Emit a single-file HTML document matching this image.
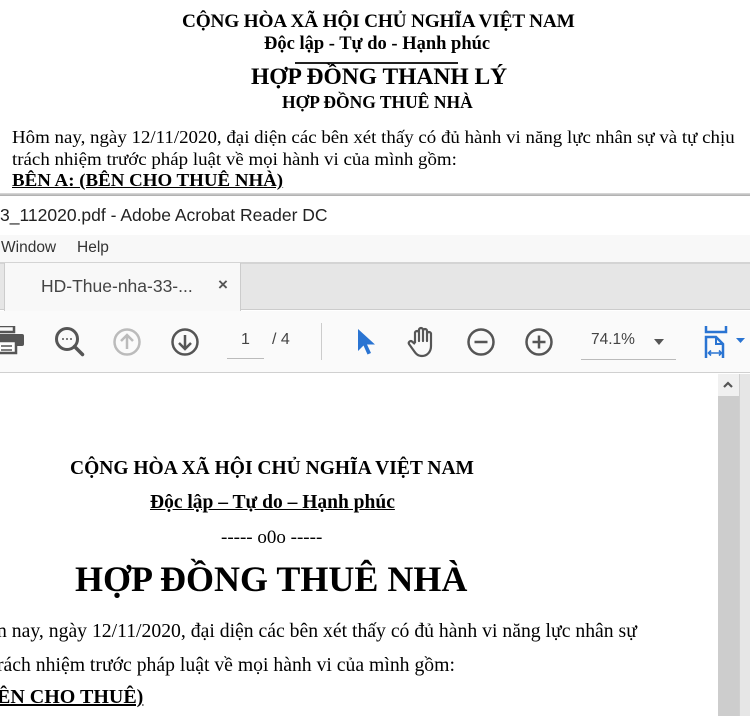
<!DOCTYPE html>
<html><head><meta charset="utf-8"><style>
*{margin:0;padding:0;box-sizing:border-box}
body{width:750px;height:716px;overflow:hidden;background:#fff;position:relative;font-family:"Liberation Serif",serif;color:#000}
.a{position:absolute;white-space:nowrap}
.ui{font-family:"Liberation Sans","DejaVu Sans",sans-serif}
svg{position:absolute}
.sx{transform-origin:0 0}
</style></head><body>
<!-- top doc -->
<div class="a" style="left:182px;top:11px;font-size:19.3px;font-weight:bold;letter-spacing:-0.2px">CỘNG HÒA XÃ HỘI CHỦ NGHĨA VIỆT NAM</div>
<div class="a" style="left:264px;top:34px;font-size:18.5px;font-weight:bold">Độc lập - Tự do - Hạnh phúc</div>
<div class="a" style="left:295px;top:62px;width:163px;height:2px;background:#222"></div>
<div class="a" style="left:251px;top:64px;font-size:23.5px;font-weight:bold">HỢP ĐỒNG THANH LÝ</div>
<div class="a" style="left:282px;top:92px;font-size:17.5px;font-weight:bold">HỢP ĐỒNG THUÊ NHÀ</div>
<div class="a sx" style="left:12px;top:127px;font-size:18px;transform:scaleX(1.05)">Hôm nay, ngày 12/11/2020, đại diện các bên xét thấy có đủ hành vi năng lực nhân sự và tự chịu</div>
<div class="a sx" style="left:12px;top:149px;font-size:18px;transform:scaleX(1.05)">trách nhiệm trước pháp luật về mọi hành vi của mình gồm:</div>
<div class="a sx" style="left:12px;top:170px;font-size:18px;font-weight:bold;text-decoration:underline;transform:scaleX(1.05)">BÊN A: (BÊN CHO THUÊ NHÀ)</div>
<div class="a" style="left:0;top:193px;width:750px;height:3px;background:linear-gradient(#ddd,#aaa)"></div>
<!-- title bar -->
<div class="a" style="left:0;top:196px;width:750px;height:39px;background:#fff"></div>
<div class="a ui" style="left:0;top:205px;font-size:17.5px;color:#222">3_112020.pdf - Adobe Acrobat Reader DC</div>
<!-- menu -->
<div class="a" style="left:0;top:235px;width:750px;height:27px;background:#f8f8f8"></div>
<div class="a ui" style="left:1px;top:239px;font-size:15.5px;color:#333">Window</div>
<div class="a ui" style="left:77px;top:239px;font-size:15.5px;color:#333">Help</div>
<!-- tabs -->
<div class="a" style="left:0;top:262px;width:750px;height:48px;background:#e6e6e6;border-top:2px solid #d4d4d4;border-bottom:1px solid #ccc"></div>
<div class="a" style="left:4px;top:263px;width:237px;height:48px;background:#f8f8f8;border-left:1px solid #ccc;border-right:1px solid #ccc"></div>
<div class="a ui" style="left:41px;top:276px;font-size:17.5px;color:#444">HD-Thue-nha-33-...</div>
<div class="a ui" style="left:218px;top:275px;font-size:17px;color:#555;font-weight:bold">×</div>
<!-- toolbar -->
<div class="a" style="left:0;top:311px;width:750px;height:62px;background:#fafafa;border-bottom:1px solid #d0d0d0"></div>
<svg style="left:0;top:326px" width="26" height="30" viewBox="0 0 26 30"><rect x="-4" y="0" width="18" height="6" fill="none" stroke="#555" stroke-width="2.5"/><rect x="-6" y="8" width="30" height="12" rx="2" fill="#555"/><rect x="-2" y="15" width="18" height="12" fill="#fff" stroke="#555" stroke-width="2.5"/><path d="M1 20h11M1 24h11" stroke="#555" stroke-width="1.5"/></svg>
<svg style="left:53px;top:325px" width="34" height="34"><circle cx="14" cy="14" r="10.5" fill="none" stroke="#555" stroke-width="3"/><path d="M21.5 21.5l8 8" stroke="#555" stroke-width="3.5" stroke-linecap="round"/><circle cx="10" cy="14" r="1" fill="#555"/><circle cx="14" cy="14" r="1" fill="#555"/><circle cx="18" cy="14" r="1" fill="#555"/></svg>
<svg style="left:112px;top:327px" width="30" height="30"><circle cx="15" cy="15" r="12.5" fill="none" stroke="#bbb" stroke-width="2.5"/><path d="M15 22V9M9 14l6-6 6 6" fill="none" stroke="#bbb" stroke-width="2.5"/></svg>
<svg style="left:170px;top:327px" width="30" height="30"><circle cx="15" cy="15" r="12.5" fill="none" stroke="#555" stroke-width="2.5"/><path d="M15 8v13M9 16l6 6 6-6" fill="none" stroke="#555" stroke-width="2.5"/></svg>
<div class="a ui" style="left:227px;top:331px;width:37px;height:28px;border-bottom:1px solid #bbb;text-align:center;font-size:16px;color:#444">1</div>
<div class="a ui" style="left:272px;top:331px;font-size:16px;color:#444">/ 4</div>
<div class="a" style="left:321px;top:323px;width:1px;height:37px;background:#ccc"></div>
<svg style="left:355px;top:328px" width="22" height="28"><path d="M3 1v22l5.5-5.5 4 9 3.5-1.5-4-8.5h8z" fill="#2a74d2"/></svg>
<svg style="left:406px;top:326px" width="32" height="32" viewBox="0 0 32 32"><path d="M9 17V7a2 2 0 014 0v8V4a2 2 0 014 0v11V5a2 2 0 014 0v10V8a2 2 0 014 0v12c0 6-4 10-9 10-4 0-6-2-8-5l-5-7a2 2 0 013-2.5L9 18" fill="none" stroke="#555" stroke-width="2.2" stroke-linejoin="round"/></svg>
<svg style="left:466px;top:327px" width="30" height="30"><circle cx="15" cy="15" r="12.5" fill="none" stroke="#555" stroke-width="2.5"/><path d="M8.5 15h13" stroke="#555" stroke-width="2.5"/></svg>
<svg style="left:524px;top:327px" width="30" height="30"><circle cx="15" cy="15" r="12.5" fill="none" stroke="#555" stroke-width="2.5"/><path d="M8.5 15h13M15 8.5v13" stroke="#555" stroke-width="2.5"/></svg>
<div class="a ui" style="left:581px;top:331px;width:95px;height:29px;border-bottom:1px solid #bbb;font-size:15.5px;color:#444;padding-left:10px">74.1%</div>
<svg style="left:653px;top:338px" width="12" height="8"><path d="M1 1h10L6 7z" fill="#555"/></svg>
<svg style="left:704px;top:325px" width="46" height="35"><path d="M2 1v6h20V1" fill="none" stroke="#2a74d2" stroke-width="2.5"/><path d="M2 33V12h10l7 7v14" fill="none" stroke="#2a74d2" stroke-width="2.5"/><path d="M12 12v7h7" fill="none" stroke="#2a74d2" stroke-width="2"/><path d="M5 28h12M7 25.5 4.5 28 7 30.5M15 25.5l2.5 2.5-2.5 2.5" fill="none" stroke="#2a74d2" stroke-width="1.6"/><path d="M32 13h9l-4.5 5z" fill="#2a74d2"/></svg>
<!-- scrollbar -->
<div class="a" style="left:718px;top:374px;width:21px;height:342px;background:#cdcdcd"></div>
<div class="a" style="left:718px;top:374px;width:21px;height:22px;background:#f0f0f0"></div>
<svg style="left:722px;top:380px" width="12" height="10"><path d="M2 7l4-4 4 4" fill="none" stroke="#555" stroke-width="2.2"/></svg>
<div class="a" style="left:739px;top:374px;width:11px;height:342px;background:#e6e6e6;border-left:1px solid #d0d0d0"></div>
<!-- page -->
<div class="a" style="left:70px;top:458px;font-size:19.5px;font-weight:bold">CỘNG HÒA XÃ HỘI CHỦ NGHĨA VIỆT NAM</div>
<div class="a" style="left:150px;top:492px;font-size:19.5px;font-weight:bold;text-decoration:underline">Độc lập – Tự do – Hạnh phúc</div>
<div class="a" style="left:221px;top:527px;font-size:19px">----- o0o -----</div>
<div class="a" style="left:75px;top:558px;font-size:36px;font-weight:bold">HỢP ĐỒNG THUÊ NHÀ</div>
<div class="a" style="left:-3px;top:620px;font-size:19.7px">n nay, ngày 12/11/2020, đại diện các bên xét thấy có đủ hành vi năng lực nhân sự</div>
<div class="a" style="left:-3px;top:654px;font-size:19.7px">rách nhiệm trước pháp luật về mọi hành vi của mình gồm:</div>
<div class="a" style="left:-3px;top:686px;font-size:20px;font-weight:bold;text-decoration:underline">ÊN CHO THUÊ)</div>
</body></html>
